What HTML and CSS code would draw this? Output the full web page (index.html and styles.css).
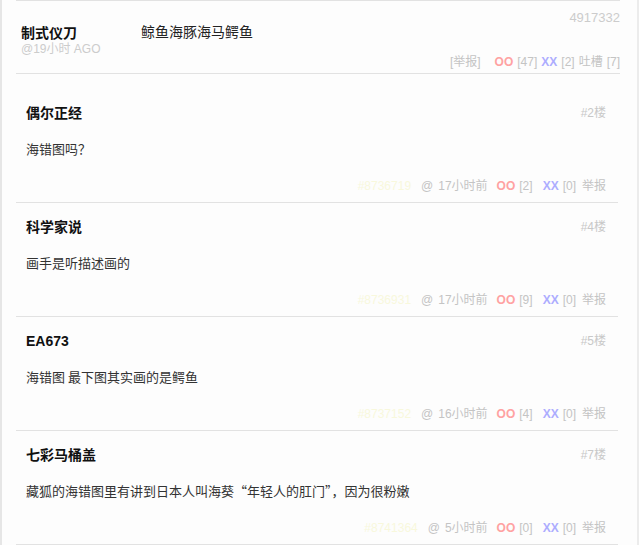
FILE: index.html
```html
<!DOCTYPE html>
<html lang="zh-cn">
<head>
  <meta charset="UTF-8" />
  <title>鲸鱼海豚海马鳄鱼</title>
  <link rel="stylesheet" href="styles.css">
</head>
<body>
  <div class="wrap">
    <div class="topic">
      <div class="topic-author">
        <div class="topic-name">制式仪刀</div>
        <div class="topic-time">@19小时 AGO</div>
      </div>
      <div class="topic-title">鲸鱼海豚海马鳄鱼</div>
      <div class="topic-side">
        <div class="topic-id">4917332</div>
        <div class="topic-actions">
          <span class="grey">[举报]</span>
          <span class="oo wide">OO</span>
          <span class="grey">[47]</span>
          <span class="xx">XX</span>
          <span class="grey">[2]</span>
          <span class="grey">吐槽</span>
          <span class="grey">[7]</span>
        </div>
      </div>
    </div>

    <div class="comment first">
      <div class="comment-head"><span class="comment-name">偶尔正经</span><span class="floor">#2楼</span></div>
      <div class="comment-body">海错图吗？</div>
      <div class="comment-foot">
        <span class="cid">#8736719</span><span class="grey at">@</span><span class="grey when">17小时前</span>
        <span class="oo">OO</span><span class="grey">[2]</span>
        <span class="xx">XX</span><span class="grey">[0]</span>
        <span class="grey report">举报</span>
      </div>
    </div>

    <div class="comment">
      <div class="comment-head"><span class="comment-name">科学家说</span><span class="floor">#4楼</span></div>
      <div class="comment-body">画手是听描述画的</div>
      <div class="comment-foot">
        <span class="cid">#8736931</span><span class="grey at">@</span><span class="grey when">17小时前</span>
        <span class="oo">OO</span><span class="grey">[9]</span>
        <span class="xx">XX</span><span class="grey">[0]</span>
        <span class="grey report">举报</span>
      </div>
    </div>

    <div class="comment">
      <div class="comment-head"><span class="comment-name">EA673</span><span class="floor">#5楼</span></div>
      <div class="comment-body">海错图 最下图其实画的是鳄鱼</div>
      <div class="comment-foot">
        <span class="cid">#8737152</span><span class="grey at">@</span><span class="grey when">16小时前</span>
        <span class="oo">OO</span><span class="grey">[4]</span>
        <span class="xx">XX</span><span class="grey">[0]</span>
        <span class="grey report">举报</span>
      </div>
    </div>

    <div class="comment">
      <div class="comment-head"><span class="comment-name">七彩马桶盖</span><span class="floor">#7楼</span></div>
      <div class="comment-body">藏狐的海错图里有讲到日本人叫海葵“年轻人的肛门”，因为很粉嫩</div>
      <div class="comment-foot">
        <span class="cid">#8741364</span><span class="grey at">@</span><span class="grey when">5小时前</span>
        <span class="oo">OO</span><span class="grey">[0]</span>
        <span class="xx">XX</span><span class="grey">[0]</span>
        <span class="grey report">举报</span>
      </div>
    </div>
  </div>
</body>
</html>
```

FILE: styles.css
```css
body {
  margin: 0;
  background: #fff;
  font-family: "Liberation Sans", "Noto Sans CJK SC", sans-serif;
  color: #333;
}

.wrap {
  width: 635px;
  height: 545px;
  background: #fdfdfd;
  border-left: 2px solid #e6e6e6;
  border-right: 2px solid #ececec;
  overflow: hidden;
}

.topic {
  display: flex;
  height: 72px;
  margin-left: 14px;
  width: 599px;
  padding-left: 5px;
  border-top: 1px solid #e2e2e2;
  border-bottom: 1px solid #e2e2e2;
}

.topic-author {
  width: 120px;
  padding-top: 24px;
}

.topic-name {
  font-size: 14px;
  font-weight: bold;
  color: #111;
  line-height: 16px;
}

.topic-time {
  font-size: 12px;
  color: #ccc;
  line-height: 17px;
}

.topic-title {
  flex: 1;
  padding-top: 23px;
  font-size: 14px;
  line-height: 16px;
  color: #222;
}

.topic-side {
  display: flex;
  flex-direction: column;
  justify-content: space-between;
  align-items: flex-end;
  padding: 9px 0 3px;
}

.topic-id {
  font-size: 13px;
  color: #ccc;
  line-height: 16px;
}

.topic-actions {
  display: flex;
  gap: 4px;
  font-size: 12px;
  line-height: 16px;
  white-space: nowrap;
}

.topic-actions .wide {
  margin-left: 10px;
}

.grey {
  color: #c4c4c4;
}

.oo {
  color: #ffa2a2;
  font-weight: bold;
}

.xx {
  color: #adadff;
  font-weight: bold;
}

.comment {
  margin-left: 14px;
  width: 580px;
  padding: 15px 12px 7px 10px;
  border-bottom: 1px solid #e2e2e2;
}

.comment.first {
  padding-top: 30px;
}

.comment-head {
  display: flex;
  justify-content: space-between;
  line-height: 18px;
}

.comment-name {
  font-size: 14px;
  font-weight: bold;
  color: #111;
}

.floor {
  font-size: 12px;
  color: #c8c8c8;
}

.comment-body {
  margin-top: 18px;
  font-family: "Noto Sans CJK SC", sans-serif;
  font-size: 13px;
  line-height: 18px;
  color: #333;
}

.comment-foot {
  display: flex;
  justify-content: flex-end;
  margin-top: 19px;
  font-size: 12px;
  line-height: 18px;
  white-space: nowrap;
}

.comment-foot .at {
  margin-left: 10px;
}

.comment-foot .when {
  margin-left: 5px;
}

.comment-foot .oo {
  margin-left: 9px;
  margin-right: 4px;
}

.comment-foot .xx {
  margin-left: 10px;
  margin-right: 4px;
}

.comment-foot .report {
  margin-left: 6px;
}

.cid {
  color: #f8f8dc;
}
```
